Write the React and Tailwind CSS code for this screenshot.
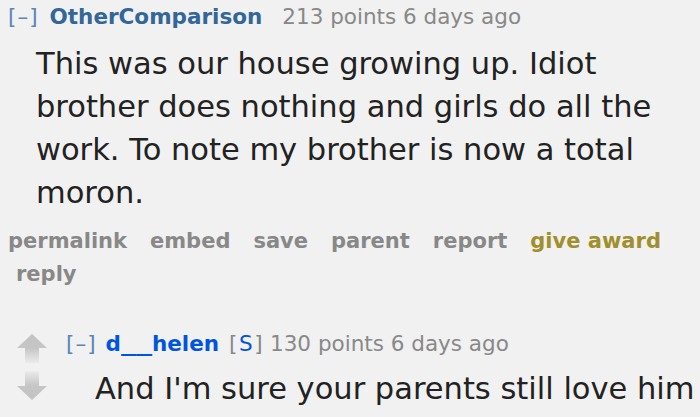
import React from "react";

function Arrow({ down }) {
  const id = down ? "gd" : "gu";
  return (
    <svg width="30" height="30" viewBox="0 0 30 30" className={down ? "rotate-180" : ""}>
      <defs>
        <linearGradient id={id} x1="0" y1="0" x2="0" y2="1">
          <stop offset="0" stopColor="#c2c2c2" />
          <stop offset="0.5" stopColor="#c6c6c6" />
          <stop offset="1" stopColor="#ebebeb" />
        </linearGradient>
      </defs>
      <path d="M15 1 L30 15 L22 15 L22 30 L8 30 L8 15 L0 15 Z" fill={`url(#${id})`} />
    </svg>
  );
}

export default function App() {
  const font = { fontFamily: '"DejaVu Sans", Verdana, sans-serif' };
  return (
    <div className="w-[700px] h-[417px] bg-[#f1f1f1] overflow-hidden" style={font}>
      <div className="pl-[8px] pt-[4px]">
        <div className="flex items-baseline text-[21.5px] leading-[26px]">
          <span className="text-[#5a86b5] tracking-[1px]">[–]</span>
          <span className="ml-[11px] font-bold text-[#336699]">OtherComparison</span>
          <span className="ml-[20px] text-[#888]">213 points 6 days ago</span>
        </div>
        <div className="pl-[28px] pt-[12px] text-[30.5px] leading-[43px] text-[#222] w-[680px]">
          This was our house growing up. Idiot brother does nothing and girls do all the work. To note my brother is now a total moron.
        </div>
        <div className="flex flex-wrap gap-x-[23px] mt-[11px] text-[21px] leading-[33px] font-bold text-[#888]">
          <span>permalink</span>
          <span>embed</span>
          <span>save</span>
          <span>parent</span>
          <span>report</span>
          <span className="text-[#a08f2d]">give award</span>
          <span className="ml-[8px]">reply</span>
        </div>
      </div>
      <div className="flex mt-[40px] pl-[17px]">
        <div className="flex flex-col gap-[8px] pt-[2px] w-[30px]">
          <Arrow />
          <Arrow down />
        </div>
        <div className="ml-[19px]">
          <div className="flex items-baseline text-[21.5px] leading-[26px]">
            <span className="text-[#5a86b5] tracking-[1px]">[–]</span>
            <span className="ml-[9px] font-bold text-[#0055df]">
              d<span className="inline-block w-[31px] origin-left scale-x-[1.45]">__</span>helen
            </span>
            <span className="ml-[10px] text-[#888] tracking-[1.5px]">[<span className="text-[#0055df]">S</span>]</span>
            <span className="ml-[6px] text-[#888]">130 points 6 days ago</span>
          </div>
          <div className="pl-[29px] pt-[10px] text-[30.5px] leading-[43px] text-[#222] whitespace-nowrap">
            And I'm sure your parents still love him
          </div>
        </div>
      </div>
    </div>
  );
}
